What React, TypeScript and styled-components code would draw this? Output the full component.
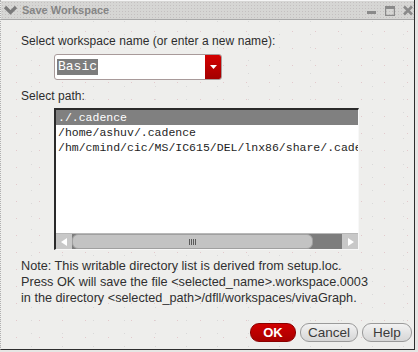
import { FC } from "react";
import styled, { createGlobalStyle } from "styled-components";

const GlobalStyle = createGlobalStyle`
  html, body {
    margin: 0;
    padding: 0;
    background: #e6e6e4;
  }
  * {
    box-sizing: border-box;
  }
`;

const Window = styled.div`
  width: 415px;
  height: 350px;
  display: flex;
  flex-direction: column;
  background-color: #eeeeec;
  background-image: radial-gradient(#e3c9cc 0.6px, transparent 0.8px),
    radial-gradient(#d9d9d9 0.6px, transparent 0.8px);
  background-size: 23px 17px, 31px 13px;
  background-position: 4px 6px, 15px 2px;
  border-left: 1px dotted #b0b0b0;
  border-right: 1px solid #2e2e2e;
  border-bottom: 1px solid #2e2e2e;
  font-family: "Liberation Sans", Arial, sans-serif;
  color: #2c2c2c;
`;

const TitleBar = styled.div`
  height: 20px;
  display: flex;
  align-items: center;
  padding: 0 1px 0 2px;
  background-color: #d6d6d4;
  background-image: radial-gradient(#c4c0c0 0.7px, transparent 0.8px);
  background-size: 3px 3px;
  border-top: 1px solid #f4f4f4;
  border-bottom: 1px solid #a8a8a8;
`;

const MenuChevron = styled.svg`
  width: 15px;
  height: 14px;
  margin-right: 4px;
`;

const Title = styled.span`
  flex: 1;
  font-size: 11px;
  font-weight: bold;
  color: #858585;
`;

const WinButtons = styled.div`
  display: flex;
  align-items: center;
  gap: 8px;
`;

const WinButton = styled.svg`
  width: 10px;
  height: 11px;
`;

const Body = styled.div`
  flex: 1;
  display: flex;
  flex-direction: column;
  padding: 14px 0 0 20px;
`;

const Label = styled.div`
  font-size: 12px;
  line-height: 14px;
  letter-spacing: 0.05px;
`;

const Combo = styled.div`
  margin: 6px 0 0 33px;
  width: 168px;
  height: 26px;
  display: flex;
  background: #ffffff;
  border: 1px solid #a89a9a;
  border-radius: 3px;
  overflow: hidden;
`;

const ComboText = styled.div`
  flex: 1;
  display: flex;
  align-items: center;
  padding-left: 2px;
`;

const Selected = styled.span`
  font-family: "Liberation Mono", "Courier New", monospace;
  font-size: 13px;
  line-height: 16px;
  background: #7d7d7d;
  color: #ffffff;
  padding: 0 1px;
`;

const ComboArrow = styled.div`
  width: 16px;
  display: flex;
  align-items: center;
  justify-content: center;
  background: linear-gradient(#d40000, #a30000);
`;

const PathLabel = styled(Label)`
  margin-top: 9px;
`;

const ListBox = styled.div`
  margin: 5px 0 0 33px;
  width: 305px;
  height: 142px;
  display: flex;
  flex-direction: column;
  background: #ffffff;
  border-top: 2px solid #2a2a2a;
  border-left: 2px solid #2a2a2a;
  border-right: 1px solid #f8f8f8;
  border-bottom: 1px solid #f8f8f8;
`;

const Rows = styled.div`
  flex: 1;
  overflow: hidden;
`;

const Row = styled.div<{ $selected?: boolean }>`
  height: 15px;
  padding-left: 2px;
  font-family: "Liberation Mono", "Courier New", monospace;
  font-size: 11.5px;
  line-height: 15px;
  white-space: nowrap;
  color: ${({ $selected }) => ($selected ? "#ffffff" : "#1e1e1e")};
  background: ${({ $selected }) => ($selected ? "#808080" : "transparent")};
`;

const ScrollBar = styled.div`
  height: 16px;
  display: flex;
  background: #7d7d7d;
  border-top: 1px solid #b8b8b8;
`;

const ArrowButton = styled.div`
  width: 16px;
  display: flex;
  align-items: center;
  justify-content: center;
  background: #c8c8c8;
`;

const Thumb = styled.div`
  width: 241px;
  display: flex;
  align-items: center;
  justify-content: center;
  background-color: #c3c3c3;
  background-image: radial-gradient(#b0b0b0 0.6px, transparent 0.7px);
  background-size: 2px 2px;
  border: 1px solid #a0a0a0;
  border-radius: 6px;
`;

const Grip = styled.div`
  width: 8px;
  height: 6px;
  background: repeating-linear-gradient(
    90deg,
    #5a5a5a 0 1px,
    transparent 1px 2px
  );
`;

const Trough = styled.div`
  flex: 1;
`;

const Note = styled.div`
  margin-top: 8px;
  font-size: 12.7px;
  line-height: 16px;
  color: #303030;
`;

const Actions = styled.div`
  margin-top: auto;
  margin-bottom: 7px;
  padding-right: 2px;
  display: flex;
  justify-content: flex-end;
  gap: 4px;
`;

const Button = styled.button<{ $primary?: boolean; $w: number }>`
  width: ${({ $w }) => $w}px;
  height: 19px;
  padding: 0;
  border-radius: 9px;
  font-family: "Liberation Sans", Arial, sans-serif;
  font-size: ${({ $primary }) => ($primary ? "13px" : "13.5px")};
  line-height: 17px;
  font-weight: ${({ $primary }) => ($primary ? "bold" : "normal")};
  color: ${({ $primary }) => ($primary ? "#ffffff" : "#3a3a3a")};
  background: ${({ $primary }) =>
    $primary
      ? "linear-gradient(#d00000, #a80000)"
      : "linear-gradient(#f2f2f2, #d6d6d6)"};
  border: 1px solid ${({ $primary }) => ($primary ? "#8a0000" : "#9a9a9a")};
`;

const paths = [
  "./.cadence",
  "/home/ashuv/.cadence",
  "/hm/cmind/cic/MS/IC615/DEL/lnx86/share/.cadence",
];

const App: FC = () => {
  return (
    <>
      <GlobalStyle />
      <Window>
        <TitleBar>
          <MenuChevron viewBox="0 0 15 14">
            <path
              d="M2 4 L7.5 9.5 L13 4"
              fill="none"
              stroke="#7a7a7a"
              strokeWidth="3.2"
            />
          </MenuChevron>
          <Title>Save Workspace</Title>
          <WinButtons>
            <WinButton viewBox="0 0 10 11">
              <rect x="0" y="6" width="9" height="3" fill="#8a8a8a" />
            </WinButton>
            <WinButton viewBox="0 0 10 11">
              <rect
                x="0.6"
                y="1.6"
                width="8.8"
                height="8.8"
                fill="none"
                stroke="#8a8a8a"
                strokeWidth="1.2"
              />
              <rect x="0" y="1" width="10" height="3" fill="#8a8a8a" />
            </WinButton>
            <WinButton viewBox="0 0 10 11">
              <path
                d="M1 1.5 L9 9.5 M9 1.5 L1 9.5"
                stroke="#8a8a8a"
                strokeWidth="2.6"
              />
            </WinButton>
          </WinButtons>
        </TitleBar>
        <Body>
          <Label>Select workspace name (or enter a new name):</Label>
          <Combo>
            <ComboText>
              <Selected>Basic</Selected>
            </ComboText>
            <ComboArrow>
              <svg width="7" height="4" viewBox="0 0 7 4">
                <path d="M0 0 H7 L3.5 4 Z" fill="#ffffff" />
              </svg>
            </ComboArrow>
          </Combo>
          <PathLabel>Select path:</PathLabel>
          <ListBox>
            <Rows>
              {paths.map((p, i) => (
                <Row key={p} $selected={i === 0}>
                  {p}
                </Row>
              ))}
            </Rows>
            <ScrollBar>
              <ArrowButton>
                <svg width="7" height="8" viewBox="0 0 7 8">
                  <path d="M6 0 V8 L0 4 Z" fill="#ffffff" />
                </svg>
              </ArrowButton>
              <Thumb>
                <Grip />
              </Thumb>
              <Trough />
              <ArrowButton>
                <svg width="7" height="8" viewBox="0 0 7 8">
                  <path d="M1 0 V8 L7 4 Z" fill="#ffffff" />
                </svg>
              </ArrowButton>
            </ScrollBar>
          </ListBox>
          <Note>
            Note: This writable directory list is derived from setup.loc.
            <br />
            Press OK will save the file &lt;selected_name&gt;.workspace.0003
            <br />
            in the directory &lt;selected_path&gt;/dfll/workspaces/vivaGraph.
          </Note>
          <Actions>
            <Button $primary $w={46}>
              OK
            </Button>
            <Button $w={58}>Cancel</Button>
            <Button $w={50}>Help</Button>
          </Actions>
        </Body>
      </Window>
    </>
  );
};

export default App;
